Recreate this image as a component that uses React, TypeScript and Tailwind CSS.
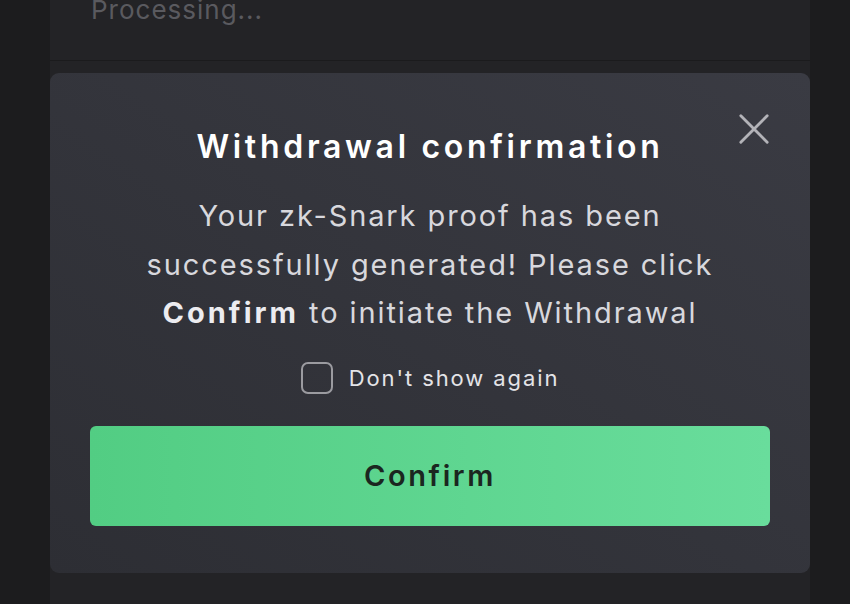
import React from "react";

export default function App() {
  return (
    <div
      className="w-[850px] h-[604px] bg-[#1c1c1e] flex pl-[50px] overflow-hidden"
      style={{ fontFamily: "Inter, 'Open Sans', sans-serif" }}
    >
      <div className="w-[760px] h-full bg-[#232326] flex flex-col">
        <div className="h-[61px] shrink-0 border-b border-[#1b1b1d] px-[41px] overflow-hidden">
          <div className="mt-[-8px] text-[26px] leading-[36px] tracking-[1px] text-[#5a5a5f]">Processing...</div>
        </div>
        <div className="mt-[12px] h-[500px] shrink-0 rounded-[9px] bg-gradient-to-tr from-[#2d2e34] to-[#3a3b43] px-[40px] pt-[48px] flex flex-col items-center relative">
          <button className="absolute right-[40px] top-[40px] w-[32px] h-[32px] flex items-center justify-center">
            <svg width="34" height="34" viewBox="0 0 34 34" fill="none" stroke="#b3b3b8" strokeWidth="3" strokeLinecap="round">
              <path d="M3 3 L31 31 M31 3 L3 31" />
            </svg>
          </button>
          <h1 className="text-[32px] leading-[52px] font-semibold text-white tracking-[3.7px]">Withdrawal confirmation</h1>
          <p className="mt-[19px] text-center text-[29px] leading-[48.5px] text-[#d8d8dd] tracking-[1.9px]">
            Your zk-Snark proof has been
            <br />
            successfully generated! Please click
            <br />
            <span className="font-bold text-[#ececf0] tracking-[3px]">Confirm</span> to initiate the Withdrawal
          </p>
          <label className="mt-[24px] flex items-center gap-[16px]">
            <span className="w-[32px] h-[32px] rounded-[7px] border-2 border-[#9b9ba0]" />
            <span className="text-[22px] leading-[32px] text-[#e4e4e8] tracking-[1.9px]">Don't show again</span>
          </label>
          <button className="mt-[32px] w-full h-[100px] shrink-0 rounded-[6px] bg-gradient-to-r from-[#52cd83] to-[#69dd9c] text-[29px] font-semibold text-[#1b2620] tracking-[2.6px]">
            Confirm
          </button>
        </div>
      </div>
    </div>
  );
}
